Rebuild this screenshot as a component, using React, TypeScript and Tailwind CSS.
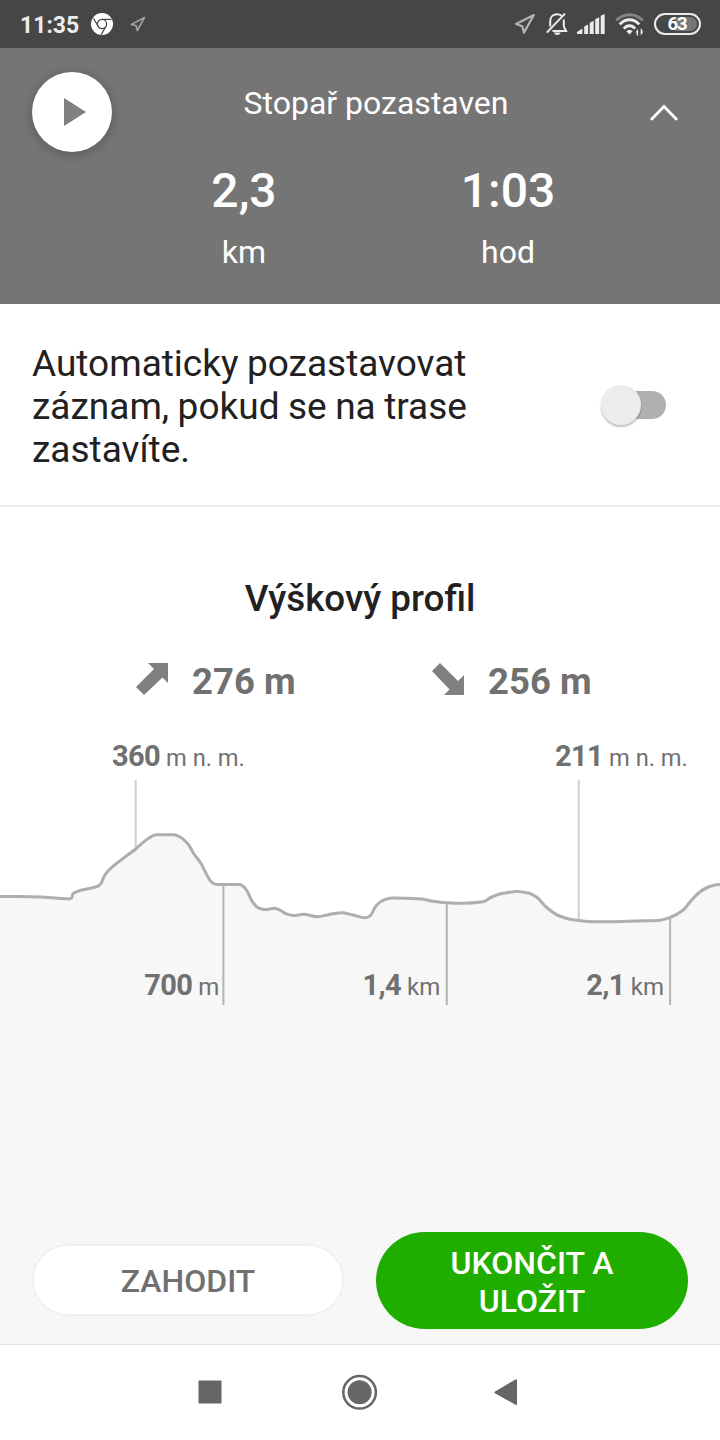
import { useState } from 'react';

type Point = [number, number];

const PROFILE: Point[] = [
  [0, 896.5], [20, 896.6], [40, 897], [58, 898.2], [69, 898.9], [71.6, 898], [73, 893.6], [78, 891.2],
  [97, 886.5], [101, 883.5], [104, 876.5], [109, 870], [135, 849.5], [149, 838], [156, 834.8],
  [174, 834.8], [180, 837], [188, 844], [194, 854], [201, 863.5], [208, 877], [212, 882.5],
  [217, 884.6], [240, 884.6], [245, 888], [253.3, 903], [258.3, 907.8], [265, 909.6], [274.3, 908.3],
  [280, 910.2], [286.7, 914], [293.3, 915.5], [303.3, 914.3], [317.3, 916.7], [330, 914.3],
  [341.7, 912.7], [353, 915], [365, 917.7], [370, 916], [376, 906], [381.7, 901], [391.7, 898],
  [421.7, 899], [433, 901.3], [446.7, 902.7], [463, 903.2], [483, 901.7], [491.7, 897], [503, 893.3],
  [517.3, 891.5], [528.3, 893], [536.7, 897.3], [546.7, 907.5], [558.3, 915.5], [570, 919.2],
  [578.7, 920.6], [593.3, 921.7], [610, 921.7], [637, 921], [658, 920.5], [670, 917.5],
  [683.3, 910], [690, 902], [700, 891.8], [708.3, 887], [715, 885], [722, 884.4],
];

// Monotone in x, so flat stretches stay flat
function smoothLine(points: Point[]) {
  const slopes = points.slice(1).map(([x, y], i) => (y - points[i][1]) / (x - points[i][0]));
  const tangents = points.map((_, i) => {
    if (i === 0) return slopes[0];
    if (i === points.length - 1) return slopes[i - 1];
    const a = slopes[i - 1];
    const b = slopes[i];
    return a * b <= 0 ? 0 : (2 * a * b) / (a + b);
  });
  let d = `M${points[0][0]} ${points[0][1]}`;
  for (let i = 1; i < points.length; i++) {
    const [x0, y0] = points[i - 1];
    const [x1, y1] = points[i];
    const h = (x1 - x0) / 3;
    d += `C${x0 + h} ${y0 + tangents[i - 1] * h} ${x1 - h} ${y1 - tangents[i] * h} ${x1} ${y1}`;
  }
  return d;
}

const ALTITUDES = [
  { value: '360', x: 135.7, textX: 112, bottom: 849 },
  { value: '211', x: 578.7, textX: 555, bottom: 920 },
];

const DISTANCES = [
  { value: '700', unit: 'm', x: 223.4, textX: 219.3, top: 885 },
  { value: '1,4', unit: 'km', x: 446.8, textX: 440.3, top: 903 },
  { value: '2,1', unit: 'km', x: 670.1, textX: 664, top: 918 },
];

function StatusBar() {
  return (
    <div className="h-12 bg-[#464646] flex items-center pl-5 pr-[19px]">
      <span className="text-[23px] leading-6 font-bold text-[#ececec] w-[71px] pt-[3px]">11:35</span>
      {/* Chrome */}
      <svg width="22" height="22" viewBox="0 0 22 22" fill="none" stroke="#464646" strokeWidth="1.2">
        <circle cx="11" cy="11" r="11" fill="#fff" stroke="none" />
        <circle cx="11" cy="11" r="4.6" />
        <path d="M11 6.4H20.5M7 13.3L2.5 5.2M15 13.3L10.2 21.6" />
      </svg>
      <svg className="ml-[17px]" width="16" height="16" viewBox="0 0 22 22" fill="none" stroke="#a5a5a5" strokeWidth="2.2" strokeLinejoin="round">
        <path d="M20 2L2 11.5L8.5 13.5L10 20Z" />
      </svg>
      <div className="flex-1" />
      <svg width="22" height="22" viewBox="0 0 22 22" fill="none" stroke="#b4b4b4" strokeWidth="2.2" strokeLinejoin="round">
        <path d="M19.8 2L2 11L8.3 13.3L10 19.6Z" />
      </svg>
      {/* Muted bell */}
      <svg className="ml-[10px]" width="22" height="22" viewBox="0 0 22 22" fill="none" stroke="#ececec" strokeWidth="2">
        <path d="M4.2 13.5V8.5C4.2 4 7 1.2 11 1.2C12.8 1.2 14.4 1.8 15.6 2.8M17.8 6.5V12.5C17.8 15 19.6 16.3 20.2 18H6.5" />
        <path d="M19 0.6L0.8 19.6" />
        <path d="M7.8 19.5H14.7C14 21.2 12.6 22 11.2 22C9.8 22 8.5 21.2 7.8 19.5Z" fill="#ececec" stroke="none" />
      </svg>
      <svg className="ml-[9px]" width="28" height="20" viewBox="0 0 28 20" fill="#ececec">
        <path d="M0 20V18L5.4 14.6V20ZM7.2 20V12.4L11.1 10.4V20ZM12.7 20V8.8L16.7 6.8V20ZM18.2 20V5.2L22.2 3.2V20ZM23.7 20V1.8L27.7 0V20Z" />
      </svg>
      <svg className="ml-[10px]" width="30" height="24" viewBox="0 0 30 24" fill="none" strokeWidth="2.9">
        <path d="M1.2 8.4C8.8 0.8 20.2 0.8 27.8 8.4" stroke="#848484" />
        <path d="M4.8 12.4C10.2 6.2 18.8 6.2 24.2 12.4M8.9 16.6C12.2 12.8 16.8 12.8 20.1 16.6" stroke="#ececec" />
        <path d="M14.5 22.4L11.4 19.3C13.1 17.4 15.9 17.4 17.6 19.3Z" fill="#ececec" />
        <path d="M20.4 20.6L23.1 16.8V23.4H21.7V20.6ZM28.4 19.6L25.7 23.4V16.8H27.1V19.6Z" fill="#ececec" />
      </svg>
      <div className="ml-[9px] w-[47px] h-[22px] rounded-full border-2 border-[#ececec] p-[2px]">
        <div className="h-full rounded-full bg-linear-to-r from-[#464646] from-[44%] to-[#777777] to-[44%] flex items-center justify-center">
          <span className="text-[18.5px] leading-none tracking-[-1px] font-bold text-white pr-px">63</span>
        </div>
      </div>
    </div>
  );
}

function Stat({ value, unit }: { value: string; unit: string }) {
  return (
    <div className="flex-1 flex flex-col items-center gap-[14px]">
      <span className="text-[48px] leading-[56px] font-medium">{value}</span>
      <span className="text-[32px] leading-[38px]">{unit}</span>
    </div>
  );
}

function TrackerHeader() {
  return (
    <header className="h-64 bg-[#757575] text-white flex">
      <div className="w-28 pl-8 pt-6">
        <button className="size-20 rounded-full bg-white flex items-center justify-center shadow-[0_2px_12px_rgba(0,0,0,0.25)]">
          <svg className="ml-[5px]" width="22" height="28" viewBox="0 0 22 28" fill="#808080">
            <path d="M0 0L22 14L0 28Z" />
          </svg>
        </button>
      </div>
      <div className="flex-1 pt-9">
        <h1 className="text-[32px] leading-[38px] text-center">Stopař pozastaven</h1>
        <div className="flex mt-[41px]">
          <Stat value="2,3" unit="km" />
          <Stat value="1:03" unit="hod" />
        </div>
      </div>
      <div className="w-20 pl-[10px] pt-14">
        <svg width="28" height="18" viewBox="0 0 28 18" fill="none" stroke="#fff" strokeWidth="2.8" strokeLinecap="round">
          <path d="M1.8 15L14 2.6L26.2 15" />
        </svg>
      </div>
    </header>
  );
}

function AutoPause() {
  const [enabled, setEnabled] = useState(false);

  return (
    <section className="h-[203px] border-b-2 border-[#eeeeee] flex items-center justify-between pl-8 pr-[54px]">
      <p className="w-[460px] pt-1 text-[37px] leading-[43px] [word-spacing:-0.7px] text-[#212121]">
        Automaticky pozastavovat záznam, pokud se na trase zastavíte.
      </p>
      <button
        role="switch"
        aria-checked={enabled}
        onClick={() => setEnabled(!enabled)}
        className="w-[52px] h-7 rounded-full bg-[#b0b0b0] flex items-center"
      >
        <span
          className={`size-10 shrink-0 rounded-full bg-[#ececec] shadow-[0_2px_2px_rgba(0,0,0,0.25)] transition-transform ${enabled ? 'translate-x-[25px]' : '-translate-x-[13px]'}`}
        />
      </button>
    </section>
  );
}

function ElevationChart() {
  const line = smoothLine(PROFILE);

  return (
    <svg className="block" width="720" height="520" viewBox="0 712 720 520" fill="none">
      <path d={`${line}V1232H0Z`} fill="#f7f7f7" />
      {ALTITUDES.map(({ value, x, textX, bottom }) => (
        <g key={value}>
          <path d={`M${x} 780V${bottom}`} stroke="#cfcfcf" strokeWidth="2" />
          <text x={textX} y="766" fill="#707070" fontSize="23.7">
            <tspan fontSize="29" fontWeight="700" letterSpacing="-0.6">{value}</tspan> m n. m.
          </text>
        </g>
      ))}
      {DISTANCES.map(({ value, unit, x, textX, top }) => (
        <g key={value}>
          <path d={`M${x} ${top}V1005`} stroke="#b4b4b4" strokeWidth="2" />
          <text x={textX} y="995" textAnchor="end" fill="#707070" fontSize="24">
            <tspan fontSize="29" fontWeight="700" letterSpacing="-0.6">{value}</tspan> {unit}
          </text>
        </g>
      ))}
      <path d={line} stroke="#aeaeae" strokeWidth="3" />
    </svg>
  );
}

function ElevationProfile() {
  return (
    <section className="pt-[71px]">
      <h2 className="text-[36.8px] leading-[42px] font-medium text-[#212121] text-center">Výškový profil</h2>
      <div className="mt-[41px] h-[51px] pl-[136px] flex text-[36.5px] leading-[42px] font-bold text-[#707070]">
        <div className="w-[296px] flex items-start gap-6">
          <svg className="mt-0.5" width="32" height="32" viewBox="0 0 32 32" fill="#808080">
            <path d="M12 0H32V20L26.5 14.5L8 32L0 24L18 6Z" />
          </svg>
          <span>276 m</span>
        </div>
        <div className="flex items-start gap-6">
          <svg className="mt-0.5" width="32" height="32" viewBox="0 0 32 32" fill="#808080">
            <path d="M32 12V32H12L17.5 26.5L0 8L8 0L26 18Z" />
          </svg>
          <span>256 m</span>
        </div>
      </div>
      <ElevationChart />
    </section>
  );
}

function NavigationBar() {
  return (
    <nav className="h-24 border-t border-[#e0e0e0] bg-white flex items-center pl-[198px] pb-px">
      <svg width="24" height="24" viewBox="0 0 24 24" fill="#666">
        <rect x="0.5" y="0.5" width="23" height="23" rx="1" />
      </svg>
      <svg className="ml-[120px]" width="36" height="36" viewBox="0 0 36 36" fill="#666">
        <circle cx="17.6" cy="18.3" r="16.3" fill="none" stroke="#666" strokeWidth="2.5" />
        <circle cx="17.6" cy="18.3" r="12" />
      </svg>
      <svg className="ml-[116px]" width="24" height="26" viewBox="0 0 24 26" fill="#666" stroke="#666" strokeLinejoin="round" strokeWidth="2">
        <path d="M1.5 13.3L22 1.3V25Z" />
      </svg>
    </nav>
  );
}

export default function App() {
  return (
    <div className="w-[720px] h-[1440px] overflow-hidden bg-white font-[Roboto,sans-serif] flex flex-col">
      <StatusBar />
      <TrackerHeader />
      <AutoPause />
      <ElevationProfile />
      <div className="flex-1 bg-[#f7f7f7] flex items-start gap-8 px-8 text-[32px] leading-[38px] font-medium">
        <button className="mt-3 w-[312px] h-[72px] rounded-full bg-white border-2 border-[#f0f0f0] pt-0.5 text-[#707070]">
          ZAHODIT
        </button>
        <button className="w-[312px] h-[97px] rounded-full bg-[#1fae00] px-14 pt-0.5 text-white">UKONČIT A ULOŽIT</button>
      </div>
      <NavigationBar />
    </div>
  );
}
